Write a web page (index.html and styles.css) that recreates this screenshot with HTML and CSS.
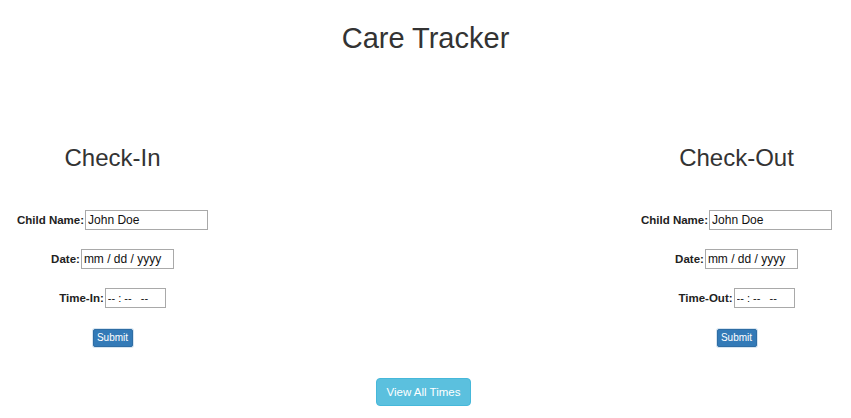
FILE: index.html
```html
<!DOCTYPE html>
<html>
<head>
<meta charset="utf-8">
<title>Care Tracker</title>
<link rel="stylesheet" href="styles.css">
</head>
<body>
<h1 class="title">Care Tracker</h1>
<div class="panels">
  <section class="panel">
    <h2 class="panel-title">Check-In</h2>
    <form class="form">
      <div class="row"><label class="lbl">Child Name:</label><input class="inp inp-name" type="text" value="John Doe"></div>
      <div class="row"><label class="lbl">Date:</label><input class="inp inp-date" type="text" value="mm / dd / yyyy"></div>
      <div class="row"><label class="lbl">Time-In:</label><input class="inp inp-time" type="text" value="-- : --   --"></div>
      <div class="row"><button class="btn-submit" type="button">Submit</button></div>
    </form>
  </section>
  <section class="panel">
    <h2 class="panel-title">Check-Out</h2>
    <form class="form">
      <div class="row"><label class="lbl">Child Name:</label><input class="inp inp-name" type="text" value="John Doe"></div>
      <div class="row"><label class="lbl">Date:</label><input class="inp inp-date" type="text" value="mm / dd / yyyy"></div>
      <div class="row"><label class="lbl">Time-Out:</label><input class="inp inp-time" type="text" value="-- : --   --"></div>
      <div class="row"><button class="btn-submit" type="button">Submit</button></div>
    </form>
  </section>
</div>
<div class="footer">
  <button class="btn-view" type="button">View All Times</button>
</div>
</body>
</html>
```
FILE: styles.css
```css
* { box-sizing: border-box; }
html, body { margin: 0; padding: 0; }
body {
  font-family: "Liberation Sans", Arial, Helvetica, sans-serif;
  color: #333;
  background: #fff;
  width: 851px;
  height: 418px;
  overflow: hidden;
}
.title {
  margin: 20px 0 0;
  font-size: 29px;
  font-weight: 400;
  line-height: 36px;
  text-align: center;
}
.panels {
  display: flex;
  justify-content: space-between;
  padding: 0 2px 0 0;
  margin-top: 88px;
}
.panel {
  width: 225px;
  display: flex;
  flex-direction: column;
  align-items: center;
}
.panel-title {
  margin: 0;
  font-size: 24px;
  font-weight: 400;
  line-height: 28px;
}
.form {
  margin-top: 38px;
  display: flex;
  flex-direction: column;
  align-items: center;
  gap: 19px;
}
.row {
  display: flex;
  align-items: center;
  justify-content: center;
  height: 20px;
}
.lbl {
  font-size: 11.5px;
  font-weight: 700;
  color: #222;
}
.inp {
  height: 20px;
  margin: 0 0 0 1px;
  padding: 0 2px;
  border: 1px solid #a9a9a9;
  font-family: "Liberation Sans", Arial, sans-serif;
  font-size: 12px;
  color: #111;
  background: #fff;
  outline: none;
}
.inp-name { width: 123px; }
.inp-date { width: 93px; }
.inp-time { width: 61px; font-size: 11px; }
.btn-submit {
  height: 18px;
  width: 40px;
  padding: 0;
  margin-top: 1px;
  font-family: "Liberation Sans", Arial, sans-serif;
  font-size: 10px;
  color: #fff;
  background: #337ab7;
  border: 1px solid #2e6da4;
  border-radius: 2px;
  box-shadow: 0 0 0 1px #d6e4f0;
}
.footer {
  display: flex;
  justify-content: center;
  margin-top: 31px;
  padding-right: 4px;
}
.btn-view {
  height: 28px;
  width: 95px;
  padding: 0;
  font-family: "Liberation Sans", Arial, sans-serif;
  font-size: 11.5px;
  color: #fff;
  background: #5bc0de;
  border: 1px solid #46b8da;
  border-radius: 4px;
}
```
